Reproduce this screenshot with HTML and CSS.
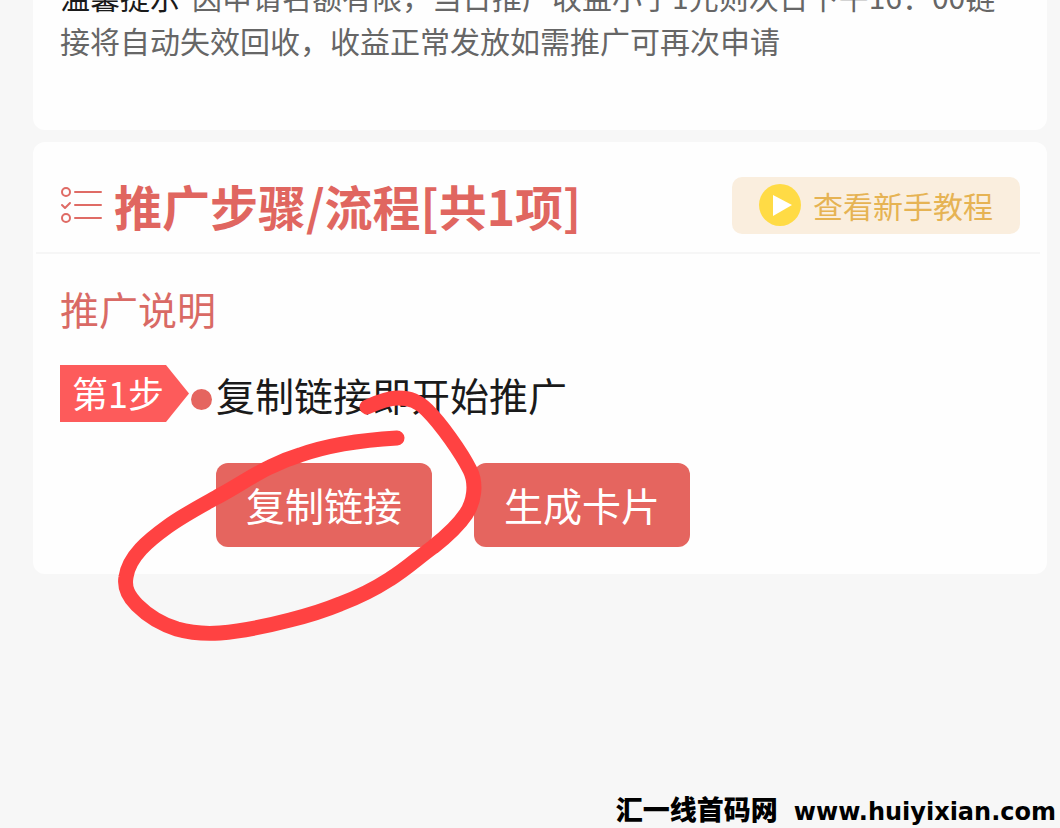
FILE: index.html
```html
<!DOCTYPE html>
<html lang="zh-CN">
<head>
    <meta charset="UTF-8">
    <meta name="viewport" content="width=device-width, initial-scale=1">
    <title>推广步骤</title>
    <link rel="stylesheet" href="styles.css">
</head>
<body>
    <main class="page">
        <section class="card tips">
            <p><strong>温馨提示</strong>因申请名额有限，当日推广收益小于1元则次日下午16：00链接将自动失效回收，收益正常发放如需推广可再次申请</p>
        </section>

        <section class="card steps">
            <header class="steps-header">
                <svg class="list-icon" viewBox="0 0 42 38" aria-hidden="true">
                    <circle cx="6" cy="6" r="4"/>
                    <path d="M15 6h26M15 19h26M15 32h26M2 19l3 3 5-5"/>
                    <circle cx="6" cy="32" r="4"/>
                </svg>
                <h1>推广步骤/流程[共1项]</h1>
                <button class="guide-button" type="button">
                    <svg class="play-icon" viewBox="0 0 42 42" aria-hidden="true">
                        <circle cx="21" cy="21" r="21"/>
                        <path d="M14 11v21l19-11z"/>
                    </svg>
                    <span>查看新手教程</span>
                </button>
            </header>

            <div class="steps-body">
                <h2>推广说明</h2>
                <div class="step">
                    <span class="step-badge">第1步</span>
                    <span class="step-dot"></span>
                    <span class="step-text">复制链接即开始推广</span>
                </div>
                <div class="actions">
                    <button class="action-button" type="button">复制链接</button>
                    <button class="action-button" type="button">生成卡片</button>
                    <!-- 手绘圈注 -->
                    <svg class="mark" viewBox="0 0 370 260" aria-hidden="true">
                        <path d="M251 15C262 10 272 6 282 6C294 6 302 9 311 18C325 32 345 60 354 78C361 92 358 110 350 122C342 134 331 144 317 155C303 165 289 178 274 187C257 198 240 206 224 212C207 219 190 224 174 228C151 234 128 239 104 241C90 242 75 241 61 237C45 232 31 223 21 213C12 204 8 196 10 185C13 164 33 148 51 135C66 124 83 115 101 105C120 95 137 83 154 75C164 70 174 66 184 63C212 53 247 48 281 46"/>
                    </svg>
                </div>
            </div>
        </section>
    </main>

    <footer class="site-mark">
        <span>汇一线首码网</span>
        <span class="site-url">www.huiyixian.com</span>
    </footer>
</body>
</html>
```
FILE: styles.css
```css
* {
    box-sizing: border-box;
}
body {
    display: flex;
    flex-direction: column;
    min-height: 100vh;
    margin: 0;
    background-color: #f7f7f7;
    color: #1a1a1a;
    font-family: "Noto Sans CJK SC", sans-serif;
    font-weight: 400;
    overflow: hidden;
}
h1, h2, p {
    margin: 0;
}
button {
    border: none;
    font: inherit;
    cursor: pointer;
}
.page {
    flex: 1;
    display: flex;
    flex-direction: column;
    gap: 12px;
    margin-top: -50px;
    padding: 0 13px 0 33px;
}
.card {
    background-color: #fefefe;
    border-radius: 12px;
}
.tips {
    padding: 24px 27px 68px;
    color: #666;
    font-size: 30px;
    line-height: 44px;
}
.tips strong {
    margin-right: 12px;
    color: #1a1a1a;
    font-weight: 400;
}
.steps-header {
    display: flex;
    align-items: center;
    height: 112px;
    margin: 0 7px 0 3px;
    padding: 16px 20px 0 24px;
    border-bottom: 2px solid #f6f6f6;
}
.list-icon {
    width: 42px;
    height: 38px;
    margin-right: 12px;
    fill: none;
    stroke: #df6b65;
    stroke-width: 2;
    stroke-linecap: round;
    stroke-linejoin: round;
}
h1 {
    color: #e06660;
    font-size: 48px;
    font-weight: 700;
    line-height: 60px;
}
.guide-button {
    display: flex;
    align-items: center;
    gap: 12px;
    height: 57px;
    margin-left: auto;
    padding: 0 27px;
    border-radius: 10px;
    background-color: #faeede;
    color: #e6b353;
    font-size: 30px;
}
.play-icon {
    width: 42px;
    height: 42px;
    fill: #ffdb45;
}
.play-icon path {
    fill: #fff;
}
.steps-body {
    padding: 28px 27px 27px;
}
h2 {
    color: #d96a65;
    font-size: 39px;
    font-weight: 400;
    line-height: 52px;
}
.step {
    display: flex;
    align-items: center;
    height: 57px;
    margin-top: 31px;
    font-size: 39px;
    line-height: 54px;
}
.step-badge {
    width: 129px;
    height: 57px;
    padding-left: 12px;
    background-color: #fd5b5b;
    color: #fff;
    clip-path: polygon(0 0, 106px 0, 100% 50%, 106px 100%, 0 100%);
    font-size: 36px;
}
.step-dot {
    width: 21px;
    height: 21px;
    margin: 12px 4px 0 2px;
    border-radius: 50%;
    background-color: #e5655f;
}
.actions {
    position: relative;
    display: flex;
    gap: 42px;
    margin-top: 41px;
    padding-left: 156px;
}
.action-button {
    height: 84px;
    padding: 0 30px 2px;
    border-radius: 12px;
    background-color: #e5655f;
    color: #fff;
    font-size: 39px;
}
.mark {
    position: absolute;
    top: -71px;
    left: 56px;
    width: 370px;
    height: 260px;
    overflow: visible;
    fill: none;
    stroke: #ff4242;
    stroke-width: 15;
    stroke-linecap: round;
    stroke-linejoin: round;
    pointer-events: none;
}
.site-mark {
    display: flex;
    justify-content: flex-end;
    align-items: baseline;
    gap: 16px;
    padding-right: 4px;
    color: #000;
    font-size: 27px;
    font-weight: 900;
    line-height: 32px;
}
.site-url {
    font-family: "DejaVu Sans", sans-serif;
    font-size: 24px;
    font-weight: 700;
}
```
